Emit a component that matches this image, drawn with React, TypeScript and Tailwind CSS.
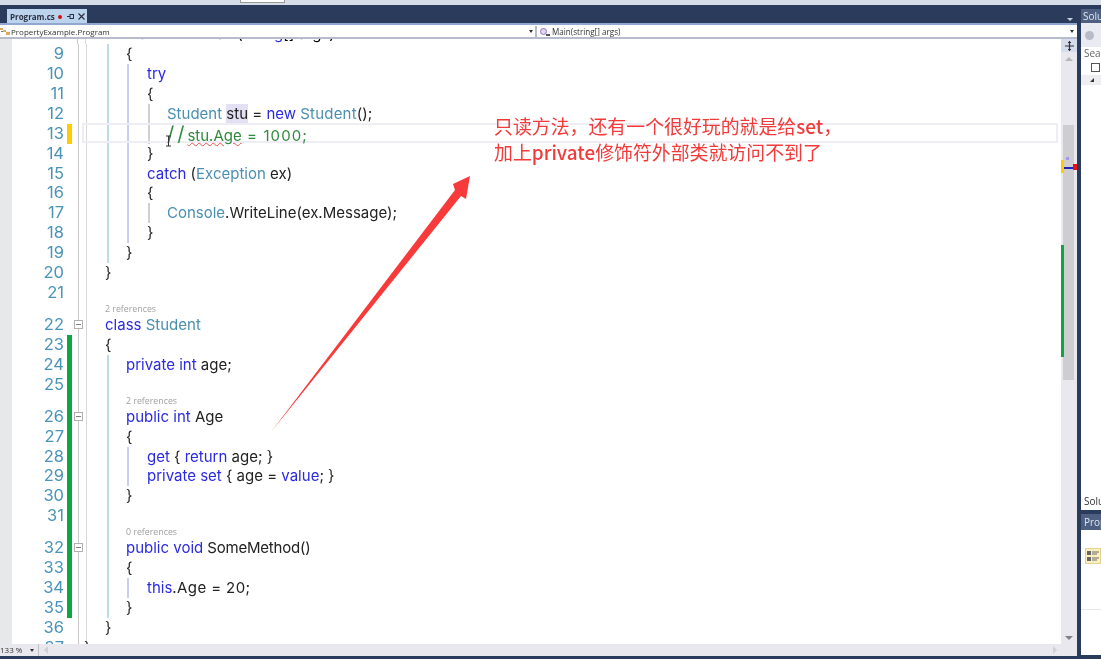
import React from "react";

const K = "text-[#2a2ae0]";
const T = "text-[#4a90b0]";
const C = "text-[#2f8a3c]";

type Tok = [string, string?];
type Row = { n?: number; h?: number; indent: number; toks?: Tok[]; ref?: string; bar?: string; fold?: boolean; guides: number[]; current?: boolean };

const G1 = 107, G2 = 127, G3 = 148;
const gcol: Record<number, string> = { 107: "bg-[#bcdde8]", 127: "bg-[#c9cdf0]", 148: "bg-[#d0d0d0]" };
const GREEN = "bg-[#0ea642]";

const rows: Row[] = [
  { n: 9, indent: 1, toks: [["{"]], guides: [G1] },
  { n: 10, indent: 2, toks: [["try", K]], guides: [G1, G2] },
  { n: 11, indent: 2, toks: [["{"]], guides: [G1, G2] },
  { n: 12, indent: 3, toks: [["Student", T], [" "], ["stu", "bg-[#e4e0f4]"], [" = "], ["new", K], [" "], ["Student", T + " tracking-[0.2px]"], ["();"]], guides: [G1, G2, G3] },
  { n: 13, indent: 3, toks: [["//", C + " text-[20px] leading-none tracking-[3px]"], ["stu.Age", C + " underline decoration-wavy decoration-[#f05050] decoration-1"], [" = 1000;", C + " tracking-[1.1px]"]], guides: [G1, G2, G3], bar: "bg-[#ffcc00]", current: true },
  { n: 14, indent: 2, toks: [["}"]], guides: [G1, G2] },
  { n: 15, indent: 2, toks: [["catch", K], [" ("], ["Exception", T], [" ex)"]], guides: [G1, G2] },
  { n: 16, indent: 2, toks: [["{"]], guides: [G1, G2] },
  { n: 17, indent: 3, toks: [["Console", T], [".WriteLine(ex.Message);"]], guides: [G1, G2, G3] },
  { n: 18, indent: 2, toks: [["}"]], guides: [G1, G2] },
  { n: 19, indent: 1, toks: [["}"]], guides: [G1] },
  { n: 20, indent: 0, toks: [["}"]], guides: [] },
  { n: 21, indent: 0, guides: [] },
  { h: 12, indent: 0, ref: "2 references", guides: [] },
  { n: 22, indent: 0, toks: [["class", K], [" "], ["Student", T]], guides: [], fold: true },
  { n: 23, indent: 0, toks: [["{"]], guides: [], bar: GREEN },
  { n: 24, indent: 1, toks: [["private", K], [" "], ["int", K], [" age;"]], guides: [G1], bar: GREEN },
  { n: 25, indent: 1, guides: [G1], bar: GREEN },
  { h: 12, indent: 1, ref: "2 references", guides: [G1], bar: GREEN },
  { n: 26, indent: 1, toks: [["public", K], [" "], ["int", K], [" Age"]], guides: [G1], bar: GREEN, fold: true },
  { n: 27, indent: 1, toks: [["{"]], guides: [G1], bar: GREEN },
  { n: 28, indent: 2, toks: [["get", K], [" { "], ["return", K], [" age; }"]], guides: [G1, G2], bar: GREEN },
  { n: 29, indent: 2, toks: [["private", K], [" "], ["set", K], [" { age = "], ["value", K], ["; }"]], guides: [G1, G2], bar: GREEN },
  { n: 30, indent: 1, toks: [["}"]], guides: [G1], bar: GREEN },
  { n: 31, indent: 1, guides: [G1], bar: GREEN },
  { h: 12, indent: 1, ref: "0 references", guides: [G1], bar: GREEN },
  { n: 32, indent: 1, toks: [["public", K], [" "], ["void", K], [" SomeMethod()", "tracking-[-0.2px]"]], guides: [G1], bar: GREEN, fold: true },
  { n: 33, indent: 1, toks: [["{"]], guides: [G1], bar: GREEN },
  { n: 34, indent: 2, toks: [["this", K], [".Age = 20;", "tracking-[0.4px]"]], guides: [G1, G2], bar: GREEN },
  { n: 35, indent: 1, toks: [["}"]], guides: [G1], bar: GREEN },
  { n: 36, indent: 0, toks: [["}"]], guides: [] },
  { n: 37, indent: -1, toks: [["}"]], guides: [] },
];

const indentPad = ["pl-[0px]", "pl-[21px]", "pl-[42px]", "pl-[62px]"];

function CodeRow({ r }: { r: Row }) {
  const h = r.h ? "h-[12px]" : "h-[19.93px]";
  return (
    <div className={`relative flex ${h} shrink-0`}>
      <div className="w-[12px] shrink-0 bg-[#e7e8ea]" />
      <div className="w-[52px] shrink-0 overflow-hidden text-right font-['Inter',sans-serif] text-[16.5px] leading-[19.93px] text-[#4a93b8]">{r.n}</div>
      <div className="w-[3px] shrink-0" />
      <div className={`w-[5px] shrink-0 ${r.bar ?? ""}`} />
      <div className="w-[5px] shrink-0" />
      <div className="relative w-[2px] shrink-0 border-r border-[#c8c8c8]">
        {r.fold && (
          <span className="absolute left-[-3px] top-[5px] flex h-[9px] w-[9px] items-center justify-center border border-[#b0b0b0] bg-white">
            <span className="h-px w-[5px] bg-[#808080]" />
          </span>
        )}
      </div>
      <div className="w-[8px] shrink-0 border-r border-[#d8d8d8]" />
      <div className="relative min-w-0 flex-1 pl-[18px]">
        {r.guides.map((g) => (
          <span key={g} className={`absolute top-0 bottom-0 w-[1.5px] ${gcol[g]}`} style={{ left: g - 87 }} />
        ))}
        {r.current && <div className="absolute left-[-5px] top-[-1px] h-[20px] w-[976px] border-2 border-[#eeedf5]" />}
        {r.ref ? (
          <div className={`${indentPad[r.indent]} relative whitespace-nowrap font-['Open_Sans',sans-serif] text-[8.8px] leading-[12px] text-[#a0a0a0]`}>{r.ref}</div>
        ) : (
          <div className={`${r.indent < 0 ? "ml-[-21px]" : indentPad[r.indent]} relative whitespace-pre font-['Inter',sans-serif] text-[15px] leading-[19.93px] text-[#222]`}>
            {r.toks?.map((t, i) => (
              <span key={i} className={t[1] ?? ""}>{t[0]}</span>
            ))}
          </div>
        )}
      </div>
    </div>
  );
}

function Caret() {
  return <span className="h-0 w-0 shrink-0 border-x-[2.5px] border-t-[3px] border-x-transparent border-t-[#333]" />;
}

export default function App() {
  return (
    <div className="flex h-[659px] w-[1101px] flex-col overflow-hidden bg-[#2a3b5c] font-['Open_Sans','Noto_Sans_CJK_SC',sans-serif] blur-[0.35px]">
      {/* toolbar remnant */}
      <div className="flex h-[5px] shrink-0 bg-[#d6dbe8]">
        <div className="ml-[240px] h-[3px] w-[45px] border-x border-b border-[#9a9a9a] bg-white" />
      </div>
      <div className="flex min-h-0 flex-1">
        {/* editor column */}
        <div className="flex w-[1077px] shrink-0 flex-col">
          <div className="flex h-[18px] shrink-0 items-end justify-between pl-[7px] pr-[2px]">
            <div className="flex h-[14px] w-[80px] items-center bg-[#bcd3ee] pl-[3px] pt-[1px] text-[8px] font-bold text-[#2a3040]">
              <span>Program.cs</span>
              <span className="ml-[3px] h-[4px] w-[4px] rounded-full bg-[#d01010]" />
              <svg className="ml-[5px]" width="7" height="7" viewBox="0 0 7 7">
                <path d="M0 3.5h3M3 1v5M3 1.5h4M3 5.5h4M6.5 1.5v4" stroke="#2a3040" strokeWidth="1" fill="none" />
              </svg>
              <svg className="ml-[4px]" width="7" height="7" viewBox="0 0 7 7">
                <path d="M0.5 0.5l6 6M6.5 0.5l-6 6" stroke="#2a3040" strokeWidth="1.2" fill="none" />
              </svg>
            </div>
            <span className="mb-[2px] mr-[2px] h-0 w-0 border-x-[3px] border-t-[3px] border-x-transparent border-t-[#c8d0e0]" />
          </div>
          <div className="h-[2px] shrink-0 bg-[#90a8d0]" />
          <div className="flex h-[14px] shrink-0 border-b-2 border-[#b6bccb] bg-white pt-[1px] text-[8px] leading-[12px] text-[#333]">
            <div className="flex w-[535px] shrink-0 items-center pr-[2px]">
              <svg className="mr-[1px] shrink-0" width="10" height="9" viewBox="0 0 10 9">
                <path d="M0 1h3v2h-3zM3 3h3v2h-3zM6 5h4v3h-4z" fill="#dda860" />
                <path d="M1 4h2v1h-2z" fill="#777" />
              </svg>
              <span className="flex-1">PropertyExample.Program</span>
              <Caret />
            </div>
            <div className="flex flex-1 items-center border-l-2 border-[#b6bccb] pr-[3px] pl-[2px]">
              <span className="relative mr-[5px] ml-[1px] h-[7px] w-[7px] shrink-0 rounded-full border border-[#9070c0] bg-[#e0d8f0]">
                <span className="absolute left-[5px] top-[5px] h-[2px] w-[4px] bg-[#555]" />
              </span>
              <span className="flex-1 text-[8.1px]">Main(string[] args)</span>
              <Caret />
            </div>
          </div>
          {/* editor + scrollbar */}
          <div className="flex min-h-0 flex-1">
            <div className="relative min-w-0 flex-1 overflow-hidden bg-white">
              <div className="flex h-[5px] shrink-0 overflow-hidden">
                <div className="w-[12px] shrink-0 bg-[#e7e8ea]" />
                <div className="w-[66px] shrink-0 border-r border-[#c8c8c8]" />
                <div className="w-[8px] shrink-0 border-r border-[#d8d8d8]" />
                <div className="relative ml-[40px] mt-[-15px] whitespace-pre font-['Inter',sans-serif] text-[15px] leading-[19.93px]">
                  <span className={K}>static</span> <span className={K}>void</span> Main(<span className={K}>string</span>[] args)
                </div>
              </div>
              {rows.map((r, i) => (
                <CodeRow key={i} r={r} />
              ))}
            </div>
            <div className="relative w-[16px] shrink-0 bg-[#e8e8ee]">
              <div className="flex h-[13px] items-center justify-center bg-[#d5dcee]">
                <svg width="9" height="10" viewBox="0 0 9 10">
                  <path d="M4.5 0v10M0 5h9M3 1.5h3M3 8.5h3" stroke="#333" strokeWidth="1.2" fill="none" />
                </svg>
              </div>
              <div className="mx-auto mt-[5px] h-0 w-0 border-x-[4px] border-b-[4px] border-x-transparent border-b-[#b8b8bc]" />
              <div className="absolute left-[2px] top-[86px] h-[255px] w-[11px] bg-[#cdcdd2]" />
              <div className="absolute left-0 top-[206px] h-[112px] w-[3px] bg-[#0ea642]" />
              <div className="absolute left-0 top-[121px] h-[13px] w-[3px] bg-[#ffcc00]" />
              <div className="absolute left-[3px] top-[128px] h-[1.5px] w-[10px] bg-[#2020c0]" />
              <div className="absolute left-[12px] top-[125px] h-[6px] w-[4px] bg-[#e81010]" />
              <div className="absolute left-[5px] top-[118px] h-[3px] w-[3px] bg-[#a898e8]" />
              <div className="absolute bottom-[4px] left-[4px] h-0 w-0 border-x-[4px] border-t-[4px] border-x-transparent border-t-[#808088]" />
            </div>
          </div>
          {/* horizontal scrollbar */}
          <div className="flex h-[12px] shrink-0 items-center bg-[#e8e8ee] text-[8px] leading-none text-[#333]">
            <div className="flex h-full w-[39px] items-center justify-between border-r border-[#c0c0c8] pr-[4px]">
              <span>133 %</span>
              <Caret />
            </div>
            <span className="ml-[5px] h-0 w-0 border-y-[4px] border-r-[4px] border-y-transparent border-r-[#d0d0d6]" />
            <span className="ml-auto mr-[20px] h-0 w-0 border-y-[4px] border-l-[4px] border-y-transparent border-l-[#d0d0d6]" />
          </div>
          <div className="h-[3px] shrink-0" />
        </div>
        <div className="w-[4px] shrink-0" />
        {/* right panels */}
        <div className="flex min-w-0 flex-1 flex-col pb-[4px] pt-[4px] text-[10px] text-[#333]">
          <div className="flex h-[14px] shrink-0 items-center overflow-hidden whitespace-nowrap bg-[#4d6082] pl-[2px] text-[#dfe5f0]">Solution Explorer</div>
          <div className="flex min-h-0 flex-1 flex-col bg-white">
            <div className="flex h-[24px] shrink-0 items-center bg-[#e9ebf2] pl-[4px]">
              <span className="h-[9px] w-[9px] rounded-full bg-[#b8bcc4]" />
            </div>
            <div className="flex h-[13px] shrink-0 items-center overflow-hidden whitespace-nowrap bg-white pl-[3px] text-[#666]">Search Solution</div>
            <div className="flex h-[15px] shrink-0 items-center pl-[10px]">
              <span className="h-[9px] w-[9px] border border-[#555]" />
            </div>
            <div className="flex h-[10px] shrink-0 items-center bg-[#eeeef0] pl-[9px]">
              <span className="h-0 w-0 border-b-[4px] border-l-[4px] border-b-[#333] border-l-transparent" />
            </div>
            <div className="flex flex-1 items-end overflow-hidden whitespace-nowrap pb-[1px] pl-[3px]">Solution</div>
          </div>
          <div className="h-[4px] shrink-0" />
          <div className="flex h-[16px] shrink-0 items-center overflow-hidden whitespace-nowrap bg-[#4d6082] pl-[3px] text-[#dfe5f0]">Properties</div>
          <div className="flex h-[125px] shrink-0 flex-col bg-white">
            <div className="ml-[4px] mt-[18px] flex h-[16px] w-[16px] items-center justify-center border border-[#e6d08a] bg-[#fdf0c0]">
              <svg width="12" height="10" viewBox="0 0 12 10">
                <path d="M0 0h4v4h-4zM0 6h4v4h-4z" fill="#666" />
                <path d="M5 1h7M5 3h5M5 7h7M5 9h5" stroke="#666" strokeWidth="1" />
              </svg>
            </div>
            <div className="mt-[45px] h-px bg-[#e8e8e8]" />
          </div>
        </div>
      </div>

      {/* annotation overlay */}
      <div className="pointer-events-none absolute left-[494px] top-[113px] whitespace-nowrap font-['Noto_Sans_CJK_SC',sans-serif] text-[18.9px] leading-[26px] text-[#f23a3a]">
        <div>只读方法，还有一个很好玩的就是给<span className="font-medium">set</span>，</div>
        <div>加上<span className="font-medium">private</span>修饰符外部类就访问不到了</div>
      </div>
      <svg className="pointer-events-none absolute left-0 top-0" width="1101" height="659">
        <polygon points="271,432 455,190 453,184 470,176 466,199 461,196" fill="#f83a3a" />
      </svg>
      <svg className="pointer-events-none absolute left-[165px] top-[135px]" width="8" height="13">
        <path d="M1 1h5M3.5 1v10M1 11h5" stroke="#333" strokeWidth="1" fill="none" />
      </svg>
    </div>
  );
}
